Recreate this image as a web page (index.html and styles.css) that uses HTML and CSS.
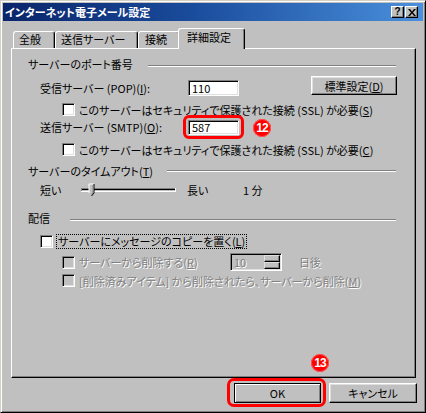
FILE: index.html
```html
<!DOCTYPE html>
<html lang="ja">
<head>
<meta charset="utf-8">
<title>インターネット電子メール設定</title>
<link rel="stylesheet" href="styles.css">
</head>
<body>
<div class="window">
  <div class="titlebar">
    <span class="title">インターネット電子メール設定</span>
    <div class="caption-btns">
      <span class="cbtn help">?</span>
      <span class="cbtn close"><svg width="8" height="7" viewBox="0 0 8 7"><path d="M0 0h2l2 2.5 2-2.5h2l-3 3.5 3 3.5h-2l-2-2.5-2 2.5h-2l3-3.5z" fill="#000"/></svg></span>
    </div>
  </div>
  <div class="content">
    <div class="tabs">
      <div class="tab t1">全般</div>
      <div class="tab t2">送信サーバー</div>
      <div class="tab t3">接続</div>
      <div class="tab active">詳細設定</div>
    </div>
    <div class="panel">
      <div class="group-head h1"><span class="gtext">サーバーのポート番号</span><i class="etch"></i></div>
      <div class="row pop">
        <span class="lbl">受信サーバー (POP)(<u>I</u>):</span>
        <span class="field">110</span>
        <span class="btn std">標準設定(<u>D</u>)</span>
      </div>
      <div class="cbrow ind2 r1"><span class="cb"></span><span class="cbtext">このサーバーはセキュリティで保護された接続 (SSL) が必要(<u>S</u>)</span></div>
      <div class="row smtp">
        <span class="lbl">送信サーバー (SMTP)(<u>O</u>):</span>
        <span class="field hl-field">587</span>
        <span class="mark m12">12</span>
      </div>
      <div class="cbrow ind2 r2"><span class="cb"></span><span class="cbtext">このサーバーはセキュリティで保護された接続 (SSL) が必要(<u>C</u>)</span></div>
      <div class="group-head h2"><span class="gtext">サーバーのタイムアウト(<u>T</u>)</span><i class="etch"></i></div>
      <div class="row slider-row">
        <span class="short">短い</span>
        <svg class="slider" width="95" height="14" viewBox="0 0 95 14">
          <rect x="0" y="5" width="95" height="4" fill="#fff"/>
          <rect x="0" y="5" width="94" height="3" fill="#808080"/>
          <rect x="1" y="6" width="93" height="1" fill="#000"/>
          <rect x="1" y="7" width="93" height="1" fill="#c0c0c0"/>
          <path d="M8 1h5v9l-2.5 3-2.5-3z" fill="#c0c0c0"/>
          <path d="M8 10V1h5" fill="none" stroke="#fff" stroke-width="1"/>
          <path d="M13 1v9l-2.5 3" fill="none" stroke="#000" stroke-width="1"/>
          <path d="M12 2v7.5l-1.5 2" fill="none" stroke="#808080" stroke-width="1"/>
        </svg>
        <span class="long">長い</span>
        <span class="val">1 分</span>
      </div>
      <div class="group-head h3"><span class="gtext">配信</span><i class="etch"></i></div>
      <div class="cbrow ind1 r3"><span class="cb"></span><span class="cbtext focus">サーバーにメッセージのコピーを置く(<u>L</u>)</span></div>
      <div class="cbrow ind2 r4 dis">
        <span class="cb"></span><span class="cbtext w4">サーバーから削除する(<u>R</u>)</span>
        <span class="spin"><span class="spinval">10</span><span class="spinbtns"><span class="sb"></span><span class="sb"></span></span></span>
        <span class="days">日後</span>
      </div>
      <div class="cbrow ind2 r5 dis"><span class="cb"></span><span class="cbtext">[削除済みアイテム] から削除されたら、サーバーから削除(<u>M</u>)</span></div>
      <span class="mark m13">13</span>
    </div>
    <div class="actions">
      <span class="hl-btn"><span class="btn default">OK</span></span>
      <span class="btn cancel">キャンセル</span>
    </div>
  </div>
</div>
</body>
</html>
```
FILE: styles.css
```css
html, body {
  margin: 0;
  padding: 0;
  background: #c0c0c0;
}
body {
  font-family: "Noto Sans CJK JP", "Noto Sans", sans-serif;
  font-size: 11px;
  font-feature-settings: "palt";
  color: #000;
}
.window {
  box-sizing: border-box;
  width: 426px;
  height: 413px;
  background: #c0c0c0;
  border: 1px solid;
  border-color: #d4d0c8 #000 #000 #d4d0c8;
  box-shadow: inset 1px 1px #fff, inset -1px -1px #808080;
  padding: 2px;
  display: flex;
  flex-direction: column;
}
.titlebar {
  height: 18px;
  flex: none;
  display: flex;
  align-items: center;
  justify-content: space-between;
  background: linear-gradient(90deg, #0a246a 0%, #1a4c9c 45%, #4a90dc 100%);
  padding-left: 2px;
}
.title {
  color: #fff;
  font-weight: bold;
  font-size: 11px;
  line-height: 14px;
}
.caption-btns {
  display: flex;
  gap: 1px;
  margin-right: 5px;
}
.cbtn {
  box-sizing: border-box;
  width: 13px;
  height: 12px;
  background: #c0c0c0;
  border: 1px solid;
  border-color: #fff #000 #000 #fff;
  box-shadow: inset -1px -1px #808080;
  display: flex;
  align-items: center;
  justify-content: center;
  font-family: "Liberation Sans", sans-serif;
  font-weight: bold;
  font-size: 10px;
  line-height: 10px;
}
.content {
  flex: 1;
  display: flex;
  flex-direction: column;
  padding: 7px 7px 0 8px;
}
.tabs {
  display: flex;
  align-items: flex-end;
  height: 20px;
  padding-left: 2px;
  position: relative;
  z-index: 1;
}
.tab {
  box-sizing: border-box;
  height: 17px;
  border-left: 1px solid #fff;
  border-top: 1px solid #fff;
  border-right: 1px solid #000;
  box-shadow: inset -1px 0 #808080;
  border-radius: 3px 3px 0 0;
  line-height: 15px;
  background: #c0c0c0;
  white-space: nowrap;
}
.t1 { width: 42px; padding-left: 5px; }
.t2 { width: 83px; padding-left: 5px; }
.t3 { width: 42px; padding-left: 6px; }
.tab.active {
  width: 67px;
  height: 21px;
  margin-left: -2px;
  margin-bottom: -1px;
  padding-left: 8px;
  line-height: 17px;
}
.panel {
  position: relative;
  box-sizing: border-box;
  height: 330px;
  border: 1px solid;
  border-color: #fff #000 #000 #fff;
  box-shadow: inset -1px -1px #808080;
  padding-top: 8px;
}
.group-head {
  display: flex;
  align-items: flex-start;
  height: 14px;
  padding-left: 16px;
  padding-right: 19px;
}
.gtext {
  line-height: 14px;
  white-space: nowrap;
  flex: none;
}
.h1 .gtext { width: 120px; }
.h2 .gtext { width: 139px; }
.h3 .gtext { width: 42px; }
.etch {
  flex: 1;
  height: 0;
  border-top: 1px solid #808080;
  border-bottom: 1px solid #fff;
  margin-top: 8px;
}
.h2 .etch { margin-top: 6px; }
.row {
  display: flex;
  align-items: flex-start;
  padding-left: 28px;
  white-space: nowrap;
}
.lbl {
  width: 148px;
  flex: none;
}
.field {
  box-sizing: border-box;
  width: 51px;
  flex: none;
  background: #fff;
  border: 1px solid;
  border-color: #808080 #fff #fff #808080;
  box-shadow: inset 1px 1px #000, inset -1px -1px #dfdfdf;
  padding-left: 3px;
}
.pop {
  margin-top: 5px;
  height: 20px;
}
.pop .lbl { margin-top: 4px; line-height: 16px; }
.pop .field { margin-top: 4px; height: 16px; line-height: 14px; }
.btn {
  box-sizing: border-box;
  display: flex;
  align-items: center;
  justify-content: center;
  background: #c0c0c0;
  border: 1px solid;
  border-color: #fff #000 #000 #fff;
  box-shadow: inset -1px -1px #808080, inset 1px 1px #dfdfdf;
  white-space: nowrap;
}
.std {
  width: 86px;
  height: 19px;
  margin-left: 72px;
}
.cbrow {
  display: flex;
  align-items: center;
  white-space: nowrap;
  height: 13px;
}
.ind1 { padding-left: 28px; }
.ind2 { padding-left: 50px; }
.cb {
  box-sizing: border-box;
  width: 13px;
  height: 13px;
  flex: none;
  background: #fff;
  border: 1px solid;
  border-color: #808080 #fff #fff #808080;
  box-shadow: inset 1px 1px #000, inset -1px -1px #dfdfdf;
}
.cbtext {
  margin-left: 4px;
  line-height: 14px;
}
.r1 { margin-top: 7px; }
.smtp {
  margin-top: 4px;
  height: 15px;
  align-items: center;
}
.smtp .lbl { line-height: 15px; }
.smtp .field { height: 15px; line-height: 13px; }
.hl-field { position: relative; }
.hl-field::after {
  content: "";
  position: absolute;
  left: -6px;
  top: -6px;
  right: -6px;
  bottom: -5px;
  border: 3px solid #f00;
  border-radius: 6px;
}
.mark {
  box-sizing: border-box;
  width: 18px;
  height: 18px;
  border-radius: 50%;
  background: #f00;
  color: #fff;
  font-family: "Liberation Sans", sans-serif;
  font-weight: bold;
  font-size: 12px;
  letter-spacing: -1px;
  display: flex;
  align-items: center;
  justify-content: center;
  box-shadow: inset 0 0 0 1px #f55;
}
.m12 { margin-left: 14px; }
.m13 {
  position: absolute;
  left: 299px;
  top: 305px;
}
.r2 { margin-top: 8px; }
.h2 { margin-top: 8px; }
.slider-row {
  margin-top: 5px;
  height: 14px;
  align-items: center;
}
.short { width: 41px; flex: none; }
.slider { flex: none; }
.long { width: 56px; margin-left: 11px; flex: none; }
.h3 { margin-top: 14px; }
.r3 { margin-top: 10px; }
.focus {
  margin-left: 4px;
  outline: 1px dotted #000;
  outline-offset: 0;
  line-height: 13px;
  padding: 0 1px;
}
.r4 {
  margin-top: 5px;
  height: 18px;
}
.dis .cb { background: #c0c0c0; }
.dis .cbtext, .dis .days, .spinval {
  color: #808080;
  text-shadow: 1px 1px 0 #fff;
}
.w4 { width: 151px; flex: none; }
.spin {
  box-sizing: border-box;
  width: 52px;
  height: 18px;
  display: flex;
  justify-content: space-between;
  border: 1px solid;
  border-color: #808080 #fff #fff #808080;
  box-shadow: inset 1px 1px #000, inset -1px -1px #dfdfdf;
  padding: 1px 1px 1px 3px;
}
.spinval { line-height: 14px; }
.spinbtns {
  display: flex;
  flex-direction: column;
  width: 16px;
}
.sb {
  box-sizing: border-box;
  flex: 1;
  border: 1px solid;
  border-color: #dfdfdf #000 #000 #dfdfdf;
  box-shadow: inset -1px -1px #808080;
}
.days { margin-left: 17px; }
.r5 { margin-top: 3px; }
.actions {
  display: flex;
  justify-content: flex-end;
  gap: 8px;
  margin-top: 5px;
  margin-right: -1px;
}
.actions .btn {
  height: 20px;
}
.hl-btn {
  position: relative;
  display: flex;
}
.hl-btn::after {
  content: "";
  position: absolute;
  left: -7px;
  top: -5px;
  right: -5px;
  bottom: -4px;
  border: 3px solid #f00;
  border-radius: 7px;
}
.default {
  width: 87px;
  border-color: #000;
  box-shadow: inset 1px 1px #fff, inset -1px -1px #808080, inset -2px -2px #c0c0c0;
}
.cancel { width: 88px; }
```
